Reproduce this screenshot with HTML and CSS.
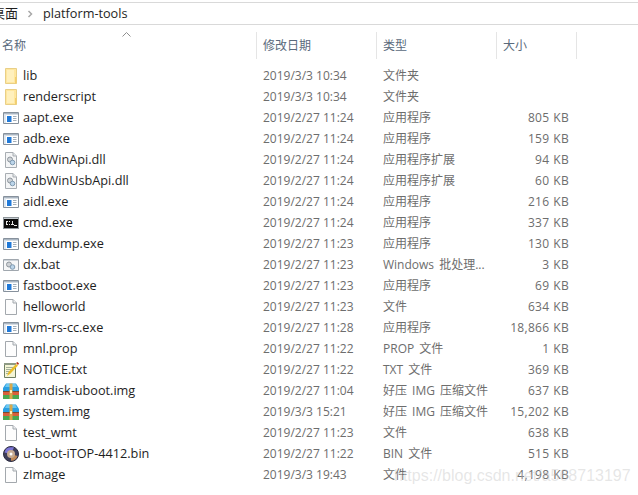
FILE: index.html
```html
<!DOCTYPE html>
<html lang="zh">
<head>
<meta charset="utf-8">
<title>platform-tools</title>
<link rel="stylesheet" href="styles.css">
</head>
<body>
<svg class="defs" width="0" height="0">
<defs>
<symbol id="folder" viewBox="0 0 16 16">
<path d="M2.500.5h11v15h-11z" fill="#ffeaa8" stroke="#e9cf86"/>
<path d="M3 1h10v14h-10z" fill="#ffe79f"/>
<path d="M4 2h7v12h-7z" fill="#fff0bd"/>
<path d="M12 9h1.500v6.500h-1.500z" fill="#f3cf6e"/>
</symbol>
<symbol id="exe" viewBox="0 0 16 16">
<path d="M.5 2.500h15v11h-15z" fill="#fff" stroke="#87919c"/>
<path d="M1 3h14v1.500h-14z" fill="#aab6c2"/>
<path d="M1 4.500h2v8.500h-2z" fill="#dfe8f1"/>
<path d="M4 6h4.500v6h-4.500z" fill="#2079d8"/>
<path d="M10 6.500h3.500M10 8.500h3.500M10 10.500h3.500" stroke="#a3aeb9"/>
</symbol>
<symbol id="dll" viewBox="0 0 16 16">
<path d="M2.500.5h7.500l3.500 3.500v11.500h-11z" fill="#f4f5f6" stroke="#a8adb2"/>
<path d="M10 .5v3.500h3.500" fill="#e3e6e9" stroke="#a8adb2"/>
<circle cx="7" cy="7.500" r="2.500" fill="#cfd3d7" stroke="#8f969d"/>
<circle cx="9.500" cy="10.500" r="2.300" fill="#bcd5ea" stroke="#7f9ab0"/>
</symbol>
<symbol id="bat" viewBox="0 0 16 16">
<path d="M.5 2.500h15v11h-15z" fill="#f6f7f8" stroke="#a0a7ae"/>
<path d="M1 3h14v1h-14z" fill="#cdd3d9"/>
<circle cx="6" cy="7.500" r="2.500" fill="#cfd3d7" stroke="#8f969d"/>
<circle cx="9.500" cy="10" r="2.300" fill="#bcd5ea" stroke="#7f9ab0"/>
</symbol>
<symbol id="cmd" viewBox="0 0 16 16">
<path d="M0 2h16v12h-16z" fill="#8d9499"/>
<path d="M1 4h14v9h-14z" fill="#0b0b0b"/>
<path d="M1 3h14v1h-14z" fill="#c5cbd0"/>
<path d="M3 6h2v1h-2zM3 7h1v2h-1zM3 9h2v1h-2zM6 6h1v1h-1zM6 9h1v1h-1zM8 9h1v-3h1v3h1v1h-3zM11 10h3v1h-3z" fill="#e8e8e8"/>
</symbol>
<symbol id="file" viewBox="0 0 16 16">
<path d="M2.500.5h7.500l3.500 3.500v11.500h-11z" fill="#fdfdfd" stroke="#a3a8ad"/>
<path d="M10 .5v3.500h3.500" fill="#eceef0" stroke="#a3a8ad"/>
</symbol>
<symbol id="txt" viewBox="0 0 16 16">
<path d="M1.500 2.500h11v13h-11z" fill="#f4f5d6" stroke="#6f7f63"/>
<path d="M1 1h12v2h-12z" fill="#8e9a85"/>
<path d="M3 5.500h8M3 7.500h6M3 9.500h5M3 11.500h4" stroke="#a5b09a"/>
<path d="M4 14l1.500-4 7.500-8 2 1.500-7.500 8z" fill="#e9bd2b"/>
<path d="M13 1l1.500-1 1.500 1.500-1 1.500z" fill="#b5301c"/>
</symbol>
<symbol id="rar" viewBox="0 0 16 16">
<path d="M0 5l3-4.500h10l3 4.500v3.500h-16z" fill="#2a9fe2"/>
<path d="M3.500 1h9l1.500 3h-12z" fill="#6cc8f0"/>
<path d="M0 8.500h16v3.500h-16z" fill="#d8603c"/>
<path d="M0 12h16v4h-16z" fill="#4ba851"/>
<path d="M0 8h16v1h-16z" fill="#7d4a2c"/>
<path d="M6.500.5h3v15.500h-3z" fill="#d9a84b"/>
<path d="M7 7h2v3h-2z" fill="#fff0b8"/>
</symbol>
<symbol id="disc" viewBox="0 0 16 16">
<circle cx="8" cy="8" r="7.500" fill="#3e3e58" stroke="#2b2b40"/>
<path d="M8 8l-6.500-1.500a6.700 6.700 0 0 1 6.500-5.200h3z" fill="#7c76d8"/>
<path d="M8 8l6.500 2a6.700 6.700 0 0 1-6.500 4.700z" fill="#c08a58"/>
<circle cx="8" cy="8" r="4" fill="#c6ab92"/>
<circle cx="8" cy="8" r="1.500" fill="#fff"/>
</symbol>
</defs>
</svg>

<div class="crumbs">
<span class="crumb-root">桌面</span>
<svg class="crumb-arrow" viewBox="0 0 6 8" width="6" height="8"><path d="M1.500 1l3 3-3 3" fill="none" stroke="#a8a8a8" stroke-width="1.500"/></svg>
<span class="crumb-name">platform-tools</span>
</div>

<div class="header">
<div class="hcell hname">名称<svg class="sort" viewBox="0 0 9 5" width="9" height="5"><path d="M.5 4.500l4-4 4 4" fill="none" stroke="#8e8e8e"/></svg></div>
<div class="hcell">修改日期</div>
<div class="hcell">类型</div>
<div class="hcell">大小</div>
</div>

<div class="list">
<div class="row"><div class="name"><svg class="icon"><use href="#folder"/></svg>lib</div><div>2019/3/3 10:34</div><div class="type">文件夹</div><div class="size"></div></div>
<div class="row"><div class="name"><svg class="icon"><use href="#folder"/></svg>renderscript</div><div>2019/3/3 10:34</div><div class="type">文件夹</div><div class="size"></div></div>
<div class="row"><div class="name"><svg class="icon"><use href="#exe"/></svg>aapt.exe</div><div>2019/2/27 11:24</div><div class="type">应用程序</div><div class="size">805 KB</div></div>
<div class="row"><div class="name"><svg class="icon"><use href="#exe"/></svg>adb.exe</div><div>2019/2/27 11:24</div><div class="type">应用程序</div><div class="size">159 KB</div></div>
<div class="row"><div class="name"><svg class="icon"><use href="#dll"/></svg>AdbWinApi.dll</div><div>2019/2/27 11:24</div><div class="type">应用程序扩展</div><div class="size">94 KB</div></div>
<div class="row"><div class="name"><svg class="icon"><use href="#dll"/></svg>AdbWinUsbApi.dll</div><div>2019/2/27 11:24</div><div class="type">应用程序扩展</div><div class="size">60 KB</div></div>
<div class="row"><div class="name"><svg class="icon"><use href="#exe"/></svg>aidl.exe</div><div>2019/2/27 11:24</div><div class="type">应用程序</div><div class="size">216 KB</div></div>
<div class="row"><div class="name"><svg class="icon"><use href="#cmd"/></svg>cmd.exe</div><div>2019/2/27 11:24</div><div class="type">应用程序</div><div class="size">337 KB</div></div>
<div class="row"><div class="name"><svg class="icon"><use href="#exe"/></svg>dexdump.exe</div><div>2019/2/27 11:23</div><div class="type">应用程序</div><div class="size">130 KB</div></div>
<div class="row"><div class="name"><svg class="icon"><use href="#bat"/></svg>dx.bat</div><div>2019/2/27 11:23</div><div class="type">Windows 批处理...</div><div class="size">3 KB</div></div>
<div class="row"><div class="name"><svg class="icon"><use href="#exe"/></svg>fastboot.exe</div><div>2019/2/27 11:23</div><div class="type">应用程序</div><div class="size">69 KB</div></div>
<div class="row"><div class="name"><svg class="icon"><use href="#file"/></svg>helloworld</div><div>2019/2/27 11:23</div><div class="type">文件</div><div class="size">634 KB</div></div>
<div class="row"><div class="name"><svg class="icon"><use href="#exe"/></svg>llvm-rs-cc.exe</div><div>2019/2/27 11:28</div><div class="type">应用程序</div><div class="size">18,866 KB</div></div>
<div class="row"><div class="name"><svg class="icon"><use href="#file"/></svg>mnl.prop</div><div>2019/2/27 11:22</div><div class="type">PROP 文件</div><div class="size">1 KB</div></div>
<div class="row"><div class="name"><svg class="icon"><use href="#txt"/></svg>NOTICE.txt</div><div>2019/2/27 11:22</div><div class="type">TXT 文件</div><div class="size">369 KB</div></div>
<div class="row"><div class="name"><svg class="icon"><use href="#rar"/></svg>ramdisk-uboot.img</div><div>2019/2/27 11:04</div><div class="type">好压 IMG 压缩文件</div><div class="size">637 KB</div></div>
<div class="row"><div class="name"><svg class="icon"><use href="#rar"/></svg>system.img</div><div>2019/3/3 15:21</div><div class="type">好压 IMG 压缩文件</div><div class="size">15,202 KB</div></div>
<div class="row"><div class="name"><svg class="icon"><use href="#file"/></svg>test_wmt</div><div>2019/2/27 11:23</div><div class="type">文件</div><div class="size">638 KB</div></div>
<div class="row"><div class="name"><svg class="icon"><use href="#disc"/></svg>u-boot-iTOP-4412.bin</div><div>2019/2/27 11:22</div><div class="type">BIN 文件</div><div class="size">515 KB</div></div>
<div class="row"><div class="name"><svg class="icon"><use href="#file"/></svg>zImage</div><div>2019/3/3 19:43</div><div class="type">文件</div><div class="size">4,198 KB</div></div>
</div>

<div class="watermark">https://blog.csdn.net/a568713197</div>
</body>
</html>
```

FILE: styles.css
```css
* { box-sizing: border-box; }
html, body { height: 100%; }
body {
  margin: 0;
  background: #fff;
  font: 12px/21px "Open Sans", "Noto Sans CJK SC", sans-serif;
  color: #6d6d6d;
  overflow: hidden;
  position: relative;
}
.defs { position: absolute; }
.crumbs {
  margin-top: 2px;
  height: 23px;
  border-top: 1px solid #d9d9d9;
  border-bottom: 1px solid #d9d9d9;
  display: flex;
  align-items: center;
  color: #1e1e1e;
  font-size: 13px;
  overflow: hidden;
}
.crumb-root { margin-left: -8px; }
.crumb-arrow { margin: 1px 10px 0 9px; }
.crumb-name { font-size: 12.7px; }
.header {
  margin-top: 7px;
  height: 27px;
  display: grid;
  grid-template-columns: 257px 120px 120px 80px;
}
.hcell {
  padding-left: 6px;
  border-right: 1px solid #e5e5e5;
  color: #5a6a7c;
  line-height: 27px;
  position: relative;
}
.hname { padding-left: 2px; }
.sort { position: absolute; left: 122px; top: 0; }
.list { margin-top: 6px; }
.row {
  display: grid;
  grid-template-columns: 257px 120px 120px 72px;
  height: 21px;
  white-space: nowrap;
}
.row > div { padding-left: 6px; }
.row > .name {
  padding-left: 3px;
  color: #1e1e1e;
  display: flex;
  align-items: center;
  gap: 4px;
  font-size: 12.7px;
}
.row > .type { word-spacing: 2px; }
.icon { width: 16px; height: 16px; flex: none; }
.row > .size {
  padding: 0;
  text-align: right;
  letter-spacing: 0.3px;
  word-spacing: 0.5px;
}
.watermark {
  position: absolute;
  left: 394px;
  top: 465px;
  font: 16px/22px "Liberation Sans", sans-serif;
  color: rgba(200, 200, 200, 0.45);
  white-space: nowrap;
}
```
